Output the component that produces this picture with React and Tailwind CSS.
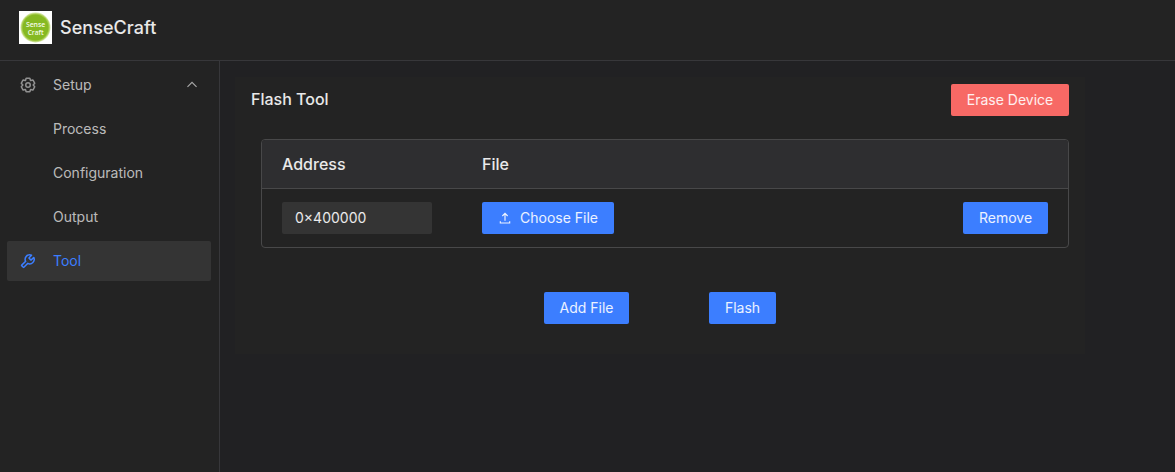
import React from 'react';

function Icon({ className, children }) {
  return (
    <svg viewBox="0 0 48 48" fill="none" stroke="currentColor" strokeWidth="4" className={className} aria-hidden="true">
      {children}
    </svg>
  );
}

const SettingsIcon = ({ className }) => (
  <Icon className={className}>
    <path d="M18.797 6.732A1 1 0 0 1 19.76 6h8.48a1 1 0 0 1 .964.732l1.285 4.628a1 1 0 0 0 1.213.7l4.651-1.2a1 1 0 0 1 1.116.468l4.24 7.344a1 1 0 0 1-.153 1.2L38.193 23.3a1 1 0 0 0 0 1.402l3.364 3.427a1 1 0 0 1 .153 1.2l-4.24 7.344a1 1 0 0 1-1.116.468l-4.65-1.2a1 1 0 0 0-1.214.7l-1.285 4.628a1 1 0 0 1-.964.732h-8.48a1 1 0 0 1-.963-.732L17.51 36.64a1 1 0 0 0-1.213-.7l-4.65 1.2a1 1 0 0 1-1.116-.468l-4.24-7.344a1 1 0 0 1 .153-1.2L9.809 24.7a1 1 0 0 0 0-1.402l-3.364-3.427a1 1 0 0 1-.153-1.2l4.24-7.344a1 1 0 0 1 1.116-.468l4.65 1.2a1 1 0 0 0 1.213-.7l1.286-4.628Z" />
    <path d="M30 24a6 6 0 1 1-12 0 6 6 0 0 1 12 0Z" />
  </Icon>
);

const ToolIcon = ({ className }) => (
  <Icon className={className}>
    <path d="M19.994 11.035c3.66-3.659 9.094-4.46 13.531-2.405a.1.1 0 0 1 .028.16l-6.488 6.488a1 1 0 0 0 0 1.414l4.243 4.243a1 1 0 0 0 1.414 0l6.488-6.488a.1.1 0 0 1 .16.028c2.056 4.437 1.254 9.872-2.405 13.53-3.695 3.696-9.2 4.477-13.66 2.347L12.923 40.733a1 1 0 0 1-1.414 0L7.266 36.49a1 1 0 0 1 0-1.414l10.382-10.382c-2.13-4.46-1.349-9.965 2.346-13.66Z" />
  </Icon>
);

const UploadIcon = ({ className }) => (
  <Icon className={className}>
    <path d="M14.93 17.071 24.001 8l9.071 9.071m-9.07 16.071v-25M40 35v6H8v-6" />
  </Icon>
);

const ChevronUpIcon = ({ className }) => (
  <Icon className={className}>
    <path d="M39.6 30.557 24.043 15 8.487 30.557" />
  </Icon>
);

function Logo() {
  return (
    <svg viewBox="0 0 33 33" className="h-[33px] w-[33px] shrink-0" role="img" aria-label="Sense Craft">
      <rect width="33" height="33" fill="#fff" />
      <circle cx="16.5" cy="16.5" r="15" fill="#cfe39b" />
      <circle cx="16.5" cy="16.5" r="14.1" fill="#a6cb4c" />
      <circle cx="16.5" cy="16.5" r="13" fill="#86b922" />
      <g fill="#f4f9e6" fontFamily="'Open Sans', sans-serif" fontWeight="600" fontSize="7.4" textAnchor="middle">
        <text x="16.6" y="15.7" textLength="19.4" lengthAdjust="spacingAndGlyphs">Sense</text>
        <text x="16.6" y="24" textLength="15.8" lengthAdjust="spacingAndGlyphs">Craft</text>
      </g>
    </svg>
  );
}

function Button({ danger, className = '', children }) {
  const tone = danger ? 'bg-[#f76965]' : 'bg-[#3c7eff]';
  return (
    <button type="button" className={`flex h-8 shrink-0 items-center justify-center rounded-[2px] text-sm text-white/90 ${tone} ${className}`}>
      {children}
    </button>
  );
}

function MenuItem({ icon, label, active, trailing }) {
  const tone = active ? 'bg-[#343434] text-[#3c7eff]' : 'text-white/70';
  return (
    <li className={`flex h-10 items-center rounded-[2px] pr-3 pl-3 text-sm ${tone}`}>
      <span className="flex w-[34px] items-center">{icon}</span>
      <span className="flex-1">{label}</span>
      {trailing}
    </li>
  );
}

export default function App() {
  return (
    <div className="flex h-screen flex-col overflow-hidden bg-[#212123] font-['Inter',sans-serif] text-white/90">
      <header className="flex h-[61px] shrink-0 items-center gap-2 border-b border-[#37373a] bg-[#232323] pb-[5px] pl-[19px]">
        <Logo />
        <h1 className="text-lg font-medium tracking-[0.003em]">SenseCraft</h1>
      </header>
      <div className="flex min-h-0 flex-1">
        <nav className="w-[220px] shrink-0 border-r border-[#37373a] bg-[#232323] pt-1 pr-2 pl-[7px]">
          <ul className="flex flex-col gap-1">
            <MenuItem
              label="Setup"
              icon={<SettingsIcon className="h-[18px] w-[18px] text-white/50" />}
              trailing={<ChevronUpIcon className="h-[14px] w-[14px] text-white/60" />}
            />
            <MenuItem label="Process" />
            <MenuItem label="Configuration" />
            <MenuItem label="Output" />
            <MenuItem label="Tool" active icon={<ToolIcon className="h-[18px] w-[18px]" />} />
          </ul>
        </nav>
        <main className="flex-1 pt-4 pl-[15px]">
          <section className="h-[277px] w-[850px] bg-[#232323] px-4 pt-[7px]">
            <div className="flex items-center justify-between">
              <h2 className="pb-0.5 text-base font-medium">Flash Tool</h2>
              <Button danger className="w-[118px]">Erase Device</Button>
            </div>
            <div className="mt-[23px] ml-[10px] h-[109px] overflow-hidden rounded-[4px] border border-[#484849]">
              <div className="flex h-[49px] items-center border-b border-[#484849] bg-[#2e2e30] px-5 text-base font-medium">
                <span className="w-[200px]">Address</span>
                <span>File</span>
              </div>
              <div className="flex h-[58px] items-center px-5">
                <div className="w-[200px]">
                  <input
                    aria-label="Address"
                    defaultValue="0×400000"
                    className="block h-8 w-[150px] rounded-[2px] bg-[#343434] px-[13px] pb-px text-sm text-white/90 outline-none"
                  />
                </div>
                <Button className="w-[132px] gap-2">
                  <UploadIcon className="h-[14px] w-[14px]" />
                  Choose File
                </Button>
                <Button className="ml-auto w-[85px]">Remove</Button>
              </div>
            </div>
            <div className="mt-11 flex justify-center gap-20">
              <Button className="w-[85px]">Add File</Button>
              <Button className="w-[67px]">Flash</Button>
            </div>
          </section>
        </main>
      </div>
    </div>
  );
}
